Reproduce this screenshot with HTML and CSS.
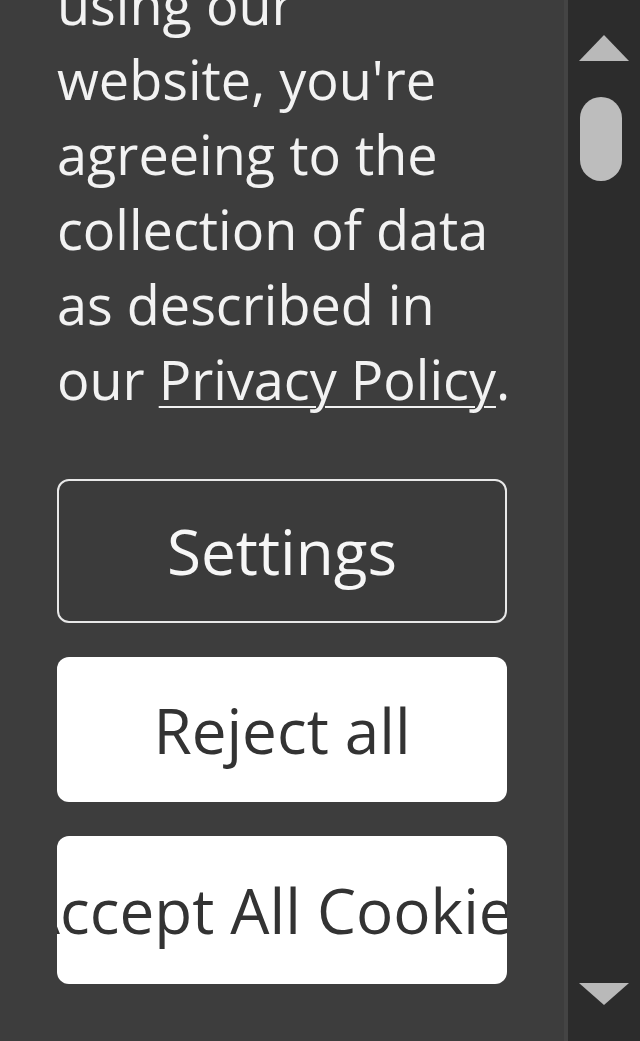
FILE: index.html
```html
<!DOCTYPE html>
<html lang="en">
<head>
    <meta charset="UTF-8">
    <meta name="viewport" content="width=device-width, initial-scale=1.0">
    <title>Cookie Notice</title>
    <link rel="stylesheet" href="styles.css">
</head>
<body>
    <div class="page">
        <div class="cookie-panel">
            <p class="cookie-text">
                using our website, you're agreeing to the collection of data as described in our <a href="#">Privacy Policy</a>.
            </p>
            <div class="cookie-buttons">
                <button class="btn btn-outline">Settings</button>
                <button class="btn btn-light">Reject all</button>
                <div class="btn btn-light btn-clip"><span>Accept All Cookies</span></div>
            </div>
        </div>
        <div class="scrollbar">
            <svg class="arrow arrow-up" width="52" height="28" viewBox="0 0 52 28">
                <polygon points="26,1 51,27 1,27" fill="#b9b9b9"/>
            </svg>
            <div class="thumb"></div>
            <div class="track-space"></div>
            <svg class="arrow arrow-down" width="52" height="24" viewBox="0 0 52 24">
                <polygon points="1,1 51,1 26,23" fill="#b9b9b9"/>
            </svg>
        </div>
    </div>
</body>
</html>
```

FILE: styles.css
```css
html, body {
    margin: 0;
    padding: 0;
    height: 100%;
    overflow: hidden;
    background-color: #3c3c3c;
    font-family: "Open Sans", "Noto Sans", sans-serif;
}
.page {
    display: flex;
    height: 1041px;
}
.cookie-panel {
    flex: 1;
    padding-left: 57px;
    background-color: #3d3d3d;
    border-right: 4px solid #444;
    overflow: hidden;
}
.cookie-text {
    width: 455px;
    margin: -33px 0 0 0;
    color: #f2f2f2;
    font-size: 54px;
    line-height: 75px;
}
.cookie-text a {
    color: #f2f2f2;
    text-decoration: underline;
    text-underline-offset: 6px;
    text-decoration-thickness: 2px;
}
.cookie-buttons {
    display: flex;
    flex-direction: column;
    gap: 34px;
    width: 450px;
    margin-top: 62px;
}
.btn {
    box-sizing: border-box;
    height: 145px;
    border-radius: 12px;
    font-family: "Open Sans", "Noto Sans", sans-serif;
    font-size: 62px;
    display: flex;
    align-items: center;
    justify-content: center;
    padding: 0;
    cursor: pointer;
}
.btn-outline {
    height: 144px;
    background-color: #3b3b3b;
    border: 2px solid #e8e8e8;
    color: #f6f6f6;
}
.btn-light {
    background-color: #ffffff;
    border: none;
    color: #333333;
}
.btn-clip {
    height: 148px;
    overflow: hidden;
    white-space: nowrap;
}
.btn-clip span {
    flex-shrink: 0;
}
.scrollbar {
    width: 72px;
    background-color: #2c2c2c;
    display: flex;
    flex-direction: column;
    align-items: center;
}
.arrow-up {
    margin-top: 34px;
}
.thumb {
    width: 42px;
    height: 84px;
    margin-top: 35px;
    margin-right: 6px;
    border-radius: 21px;
    background-color: #bdbdbd;
}
.track-space {
    flex: 1;
}
.arrow-down {
    margin-bottom: 35px;
}
```
